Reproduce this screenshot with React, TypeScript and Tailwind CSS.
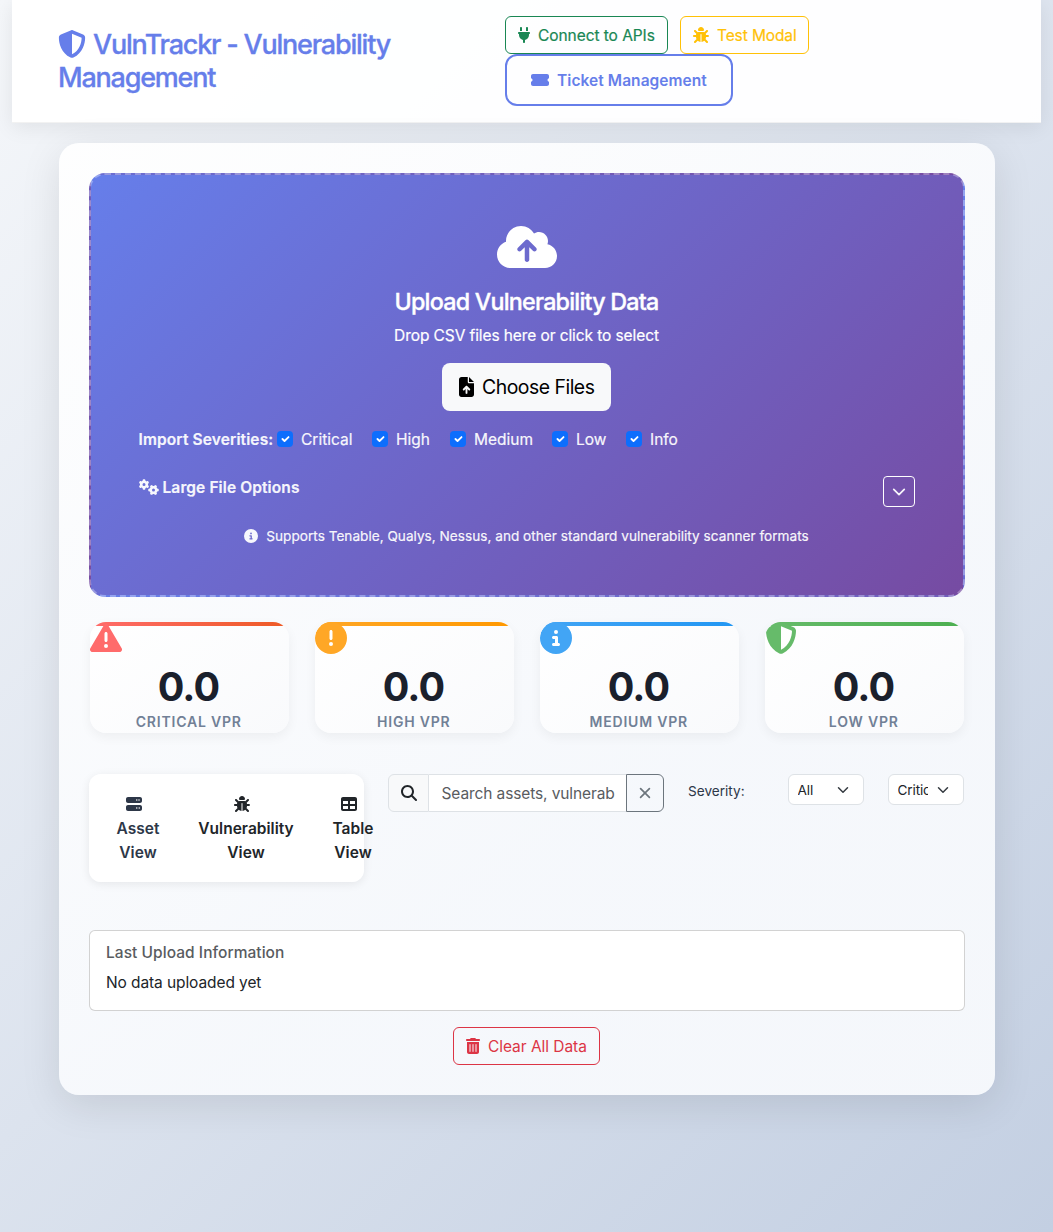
import type { ReactNode } from 'react'
import type { IconType } from 'react-icons'
import {
  FaBug,
  FaCircleExclamation,
  FaCircleInfo,
  FaCloudArrowUp,
  FaFileArrowUp,
  FaGears,
  FaMagnifyingGlass,
  FaPlug,
  FaServer,
  FaShieldHalved,
  FaTable,
  FaTicketSimple,
  FaTrashCan,
  FaTriangleExclamation,
} from 'react-icons/fa6'

function Chevron({ className }: { className: string }) {
  return (
    <svg viewBox="0 0 16 16" fill="none" className={className}>
      <path d="m2 5 6 6 6-6" stroke="currentColor" strokeWidth="2" strokeLinecap="round" strokeLinejoin="round" />
    </svg>
  )
}

function Header() {
  return (
    <header className="mx-3 flex h-[123px] border-b border-black/5 bg-white/95 shadow-[0_4px_20px_rgba(0,0,0,0.08)]">
      <h1 className="w-[447px] shrink-0 pl-[46px] pt-7 text-[27px] font-medium leading-[33px] tracking-[-0.045em] text-[#667eea] [-webkit-text-stroke:0.3px_#667eea]">
        <span className="flex items-center whitespace-nowrap">
          <FaShieldHalved className="relative -top-px mr-[7px] size-7" />
          VulnTrackr - Vulnerability
        </span>
        <span className="block">Management</span>
      </h1>
      <div className="ml-[46px] pt-4 text-[15.5px]">
        <div className="flex gap-3">
          <button className="flex h-[38px] w-[163px] items-center rounded-md border border-[#198754] pl-3 text-[#198754]">
            <FaPlug className="mr-2 h-4 w-3" />
            <span className="whitespace-nowrap pt-0.5 tracking-[-0.004em] [-webkit-text-stroke:0.2px_#198754]">Connect to APIs</span>
          </button>
          <button className="flex h-[38px] w-[129px] items-center rounded-md border border-[#ffc107] pl-3 text-[#ffc107]">
            <FaBug className="mr-2 size-4" />
            <span className="whitespace-nowrap pt-0.5 tracking-[-0.007em] [-webkit-text-stroke:0.2px_#ffc107]">Test Modal</span>
          </button>
        </div>
        <button className="flex h-[52px] w-[228px] items-center rounded-xl border-2 border-[#667eea] pl-6 font-semibold text-[#667eea]">
          <FaTicketSimple className="mr-2 h-4 w-[18px]" />
          <span className="whitespace-nowrap pt-0.5 tracking-[0.004em]">Ticket Management</span>
        </button>
      </div>
    </header>
  )
}

function Severity({ label, width }: { label: string; width: string }) {
  return (
    <label className={`flex items-center ${width}`}>
      <span className="mr-2 flex size-4 items-center justify-center rounded bg-[#0d6efd] text-white">
        <svg viewBox="0 0 20 20" fill="none" className="size-4">
          <path d="m6.8 10 2.6 2.5 5-4.9" stroke="currentColor" strokeWidth="2.3" strokeLinecap="round" strokeLinejoin="round" />
        </svg>
      </span>
      <span className="pl-[0.5px] pt-0.5">{label}</span>
    </label>
  )
}

function UploadZone() {
  return (
    <section className="flex h-[424px] flex-col items-center rounded-2xl border-2 border-dashed border-white/30 bg-linear-[135deg,#667eea_0%,#764ba2_100%] py-12 pl-[47.5px] pr-[48.5px] text-[15.5px] text-white [-webkit-text-stroke:0.2px_white]">
      <FaCloudArrowUp className="h-12 w-[60px] shrink-0" />
      <h2 className="mt-4 text-[23.3px] font-medium leading-[29px] tracking-[-0.033em] [-webkit-text-stroke:0.35px_white]">Upload Vulnerability Data</h2>
      <p className="mt-2 leading-6 tracking-[-0.006em]">Drop CSV files here or click to select</p>
      <button className="mt-[15px] flex h-12 w-[169px] shrink-0 items-center rounded-lg bg-[#f8f9fa] pl-[17px] text-[19.4px] text-black [-webkit-text-stroke:0]">
        <FaFileArrowUp className="mr-2 h-5 w-[15px]" />
        <span className="whitespace-nowrap pt-0.5 tracking-[-0.025em]">Choose Files</span>
      </button>
      <div className="mt-4 flex h-6 w-full items-center text-white/95">
        <b className="w-[138px] pt-0.5 font-semibold tracking-[0.008em]">Import Severities:</b>
        <Severity label="Critical" width="w-[95px]" />
        <Severity label="High" width="w-[78px]" />
        <Severity label="Medium" width="w-[102px]" />
        <Severity label="Low" width="w-[74px]" />
        <Severity label="Info" width="w-[60px]" />
      </div>
      <div className="mt-6 flex w-full items-start justify-between text-white/95">
        <div className="flex h-6 items-center font-semibold">
          <FaGears className="mr-1 h-4 w-5" />
          <span className="pt-0.5 tracking-[0.007em]">Large File Options</span>
        </div>
        <button className="mt-px flex h-[31px] w-8 items-center justify-center rounded border border-white">
          <Chevron className="size-[14px]" />
        </button>
      </div>
      <div className="mt-[18px] flex h-[22px] items-center text-[13.6px] text-white/95">
        <FaCircleInfo className="mr-2 size-[14px]" />
        <span className="whitespace-nowrap tracking-[0.0015em]">
          Supports Tenable, Qualys, Nessus, and other standard vulnerability scanner formats
        </span>
      </div>
    </section>
  )
}

type Stat = { label: string; bar: string; color: string; icon: IconType }

const stats: Stat[] = [
  { label: 'CRITICAL VPR', bar: 'bg-linear-[90deg,#ff6b6b,#ee5a24]', color: 'text-[#ff6b6b]', icon: FaTriangleExclamation },
  { label: 'HIGH VPR', bar: 'bg-linear-[90deg,#ffa726,#ff9800]', color: 'text-[#ffa726]', icon: FaCircleExclamation },
  { label: 'MEDIUM VPR', bar: 'bg-linear-[90deg,#42a5f5,#2196f3]', color: 'text-[#42a5f5]', icon: FaCircleInfo },
  { label: 'LOW VPR', bar: 'bg-linear-[90deg,#66bb6a,#4caf50]', color: 'text-[#66bb6a]', icon: FaShieldHalved },
]

function StatCard({ label, bar, color, icon: Icon }: Stat) {
  return (
    <div className="relative ml-px mr-[1.5px] mt-px h-[111px] overflow-hidden rounded-2xl bg-linear-[145deg,#ffffff,#f9fafc] text-center shadow-[0_4px_12px_rgba(0,0,0,0.05)]">
      <div className={`absolute inset-x-0 top-0 h-1 ${bar}`} />
      <Icon className={`relative -ml-[0.5px] size-8 ${color}`} />
      <div className="mt-[9px] pr-[1.5px] text-[39.5px] font-bold leading-[48px] tracking-[-0.022em] text-[#1a202c]">0.0</div>
      <div className="pr-px text-sm font-semibold leading-[22px] tracking-[0.058em] text-[#718096]">{label}</div>
    </div>
  )
}

function ViewButton({ icon, children, className }: { icon: ReactNode; children: ReactNode; className: string }) {
  return (
    <button className={`flex shrink-0 flex-col items-center text-[15.5px] font-semibold leading-6 tracking-[0.002em] ${className}`}>
      <span className="mb-px flex h-6 items-center pr-2">{icon}</span>
      {children}
    </button>
  )
}

function Select({ value }: { value: string }) {
  return (
    <div className="flex h-[31px] w-[76px] items-center rounded-md border border-[#dee2e6] bg-white pl-[8.5px] text-[13.6px] text-[#212529]">
      <span className="w-[30.5px] overflow-hidden whitespace-nowrap pt-px tracking-[-0.01em]">{value}</span>
      <Chevron className="ml-[9px] size-3 text-[#343a40]" />
    </div>
  )
}

function Toolbar() {
  return (
    <section className="mt-[41px] flex items-start">
      <div className="flex h-[108px] w-[275px] rounded-xl bg-white/95 pl-2 pt-[18px] shadow-[0_2px_10px_rgba(0,0,0,0.08)]">
        <ViewButton className="w-[82px] text-[#2d3748]" icon={<FaServer className="size-4" />}>
          <span>Asset</span>
          <span>View</span>
        </ViewButton>
        <ViewButton className="w-[134px] text-[#212529]" icon={<FaBug className="size-4" />}>
          <span>Vulnerability</span>
          <span>View</span>
        </ViewButton>
        <ViewButton className="w-[80px] text-[#212529]" icon={<FaTable className="size-4" />}>
          <span>Table</span>
          <span>View</span>
        </ViewButton>
      </div>
      <div className="ml-6 flex h-[38px] w-[276px] shrink-0 text-[15.5px]">
        <div className="flex w-[41px] items-center justify-center rounded-l-md border border-[#dee2e6] bg-[#f8f9fa] text-[#212529]">
          <FaMagnifyingGlass className="size-4" />
        </div>
        <div className="flex w-[197px] items-center overflow-hidden border-y border-[#dee2e6] bg-white pl-[12.5px] text-[#595c5f]">
          <span className="w-[175px] overflow-hidden whitespace-nowrap pt-0.5 tracking-[-0.007em]">Search assets, vulnerab</span>
        </div>
        <button className="flex w-[38px] items-center justify-center rounded-r-md border border-[#6c757d] text-[#6c757d]">
          <svg viewBox="0 0 16 16" fill="none" className="size-4">
            <path d="m3.6 3.6 8.8 8.8m0-8.8-8.8 8.8" stroke="currentColor" strokeWidth="1.7" strokeLinecap="round" />
          </svg>
        </button>
      </div>
      <div className="ml-6 mt-[7px] w-[100px] text-[13.6px] leading-[21px] text-[#2d3748]">Severity:</div>
      <div className="flex gap-6">
        <Select value="All" />
        <Select value="Critical" />
      </div>
    </section>
  )
}

export default function App() {
  return (
    <div className="min-h-[1232px] bg-linear-[135deg,#f5f7fa_0%,#c3cfe2_100%] font-['Inter',sans-serif] text-[#212529]">
      <Header />
      <main className="ml-[59px] mt-5 h-[952px] w-[936px] rounded-[20px] bg-linear-[145deg,rgba(255,255,255,0.93),rgba(248,250,253,0.93)_65%] p-[30px] shadow-[0_10px_40px_rgba(0,0,0,0.1)]">
        <UploadZone />
        <section className="mt-6 grid grid-cols-4 gap-6">
          {stats.map((s) => (
            <StatCard key={s.label} {...s} />
          ))}
        </section>
        <Toolbar />
        <section className="mt-12 h-[81px] rounded-md border border-black/[0.175] bg-white px-4 text-[15.5px]">
          <h3 className="mt-3 font-medium leading-[19px] tracking-[0.003em] text-[#595c5f]">Last Upload Information</h3>
          <p className="mt-[9px] leading-6 tracking-[-0.006em]">No data uploaded yet</p>
        </section>
        <div className="mt-4 flex justify-center pr-px">
          <button className="flex h-[38px] w-[147px] items-center rounded-md border border-[#dc3545] pl-3 text-[15.5px] text-[#dc3545]">
            <FaTrashCan className="mr-2 h-4 w-[14px]" />
            <span className="whitespace-nowrap pt-0.5 tracking-[-0.003em]">Clear All Data</span>
          </button>
        </div>
      </main>
    </div>
  )
}
